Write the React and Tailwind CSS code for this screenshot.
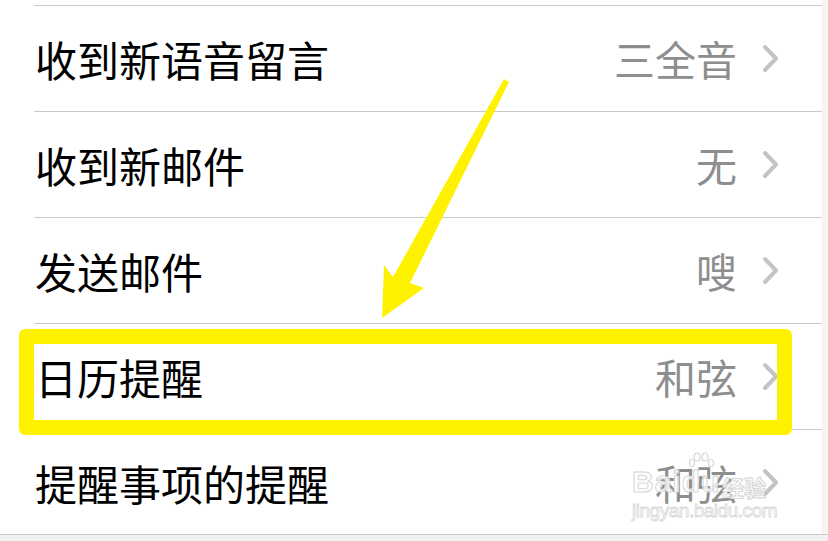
const rows = [
  { label: "收到新语音留言", value: "三全音" },
  { label: "收到新邮件", value: "无" },
  { label: "发送邮件", value: "嗖" },
  { label: "日历提醒", value: "和弦" },
  { label: "提醒事项的提醒", value: "和弦" },
];

const fontStack = { fontFamily: '"Noto Sans CJK SC", "Noto Sans", sans-serif' };

function Chevron() {
  return (
    <svg width="17" height="29" viewBox="0 0 17 29" className="ml-[25px] shrink-0">
      <polyline
        points="3,3 14,14.5 3,26"
        fill="none"
        stroke="#c4c4c4"
        strokeWidth="4"
        strokeLinecap="round"
        strokeLinejoin="round"
      />
    </svg>
  );
}

function Row({ label, value }) {
  return (
    <div className="ml-[34px] flex h-[106px] shrink-0 items-center border-t border-[#c8c8c8] pl-[1px] pr-[43px]">
      <span className="text-[42px] leading-none text-black">{label}</span>
      <span className="ml-auto text-[41px] leading-none text-[#8e8e8e]">{value}</span>
      <Chevron />
    </div>
  );
}

function Watermark() {
  return (
    <div className="pointer-events-none absolute left-[632px] top-[467px] flex flex-col items-start">
      <div className="relative flex items-end text-[30px] font-bold leading-none tracking-[1px] text-white/80 [-webkit-text-stroke:1px_#d6d6d6]" style={{ fontFamily: '"Liberation Sans", "Noto Sans CJK SC", sans-serif' }}>
        <span>Bai</span>
        <span className="relative">
          <svg width="28" height="17" viewBox="0 0 28 17" className="absolute left-[6px] top-[-15px]">
            <g fill="rgba(255,255,255,0.8)" stroke="#d4d4d4" strokeWidth="1.2">
              <ellipse cx="9" cy="5" rx="3" ry="4" />
              <ellipse cx="17" cy="5" rx="3" ry="4" />
              <ellipse cx="4" cy="11" rx="2.5" ry="3.5" />
              <ellipse cx="23" cy="11" rx="2.5" ry="3.5" />
            </g>
          </svg>
          du
        </span>
        <span className="ml-[2px] text-[22px] tracking-normal" style={fontStack}>经验</span>
      </div>
      <div className="mt-[4px] text-[19px] leading-none tracking-tight text-white/80 [-webkit-text-stroke:0.8px_#d6d6d6]" style={{ fontFamily: '"Liberation Sans Narrow", "Liberation Sans", sans-serif' }}>
        jingyan.baidu.com
      </div>
    </div>
  );
}

export default function App() {
  return (
    <div className="relative flex h-[541px] w-[828px] flex-col overflow-hidden bg-white" style={fontStack}>
      <div className="flex h-[534px] shrink-0">
        <div className="flex w-[822px] flex-col overflow-hidden bg-white pt-[5px]">
          {rows.map((row, i) => (
            <Row key={i} label={row.label} value={row.value} />
          ))}
        </div>
        <div className="flex-1 bg-[#f4f4f4]" />
      </div>
      <div className="flex-1 border-t border-[#c8c8c8] bg-[#f2f2f2]" />

      {/* highlight box */}
      <div className="pointer-events-none absolute left-[19px] top-[329px] h-[106px] w-[773px] rounded-[6px] border-[15px] border-[#fff200]" />

      {/* arrow */}
      <svg className="pointer-events-none absolute left-0 top-0" width="828" height="541">
        <polygon
          points="504,79 509,82 410,283 424,288 382,318 384,265 393,277"
          fill="#fff200"
        />
      </svg>

      <Watermark />
    </div>
  );
}
